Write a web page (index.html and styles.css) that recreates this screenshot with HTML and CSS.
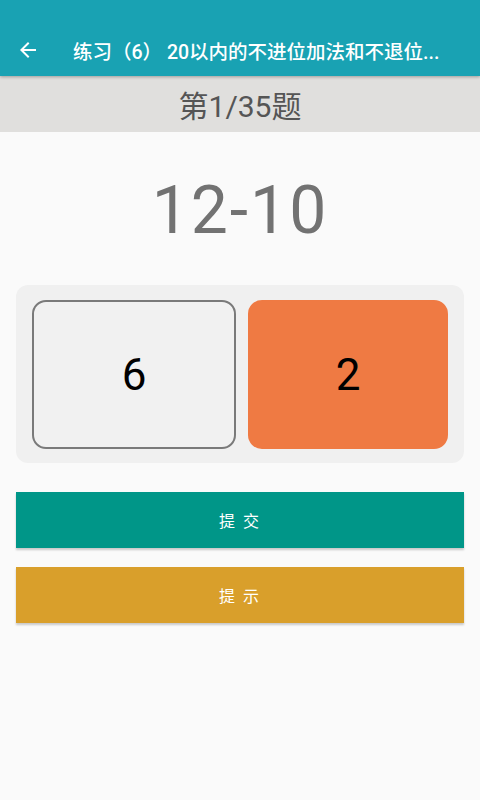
FILE: index.html
```html
<!DOCTYPE html>
<html lang="zh">
<head>
<meta charset="utf-8">
<link rel="stylesheet" href="styles.css">
</head>
<body>
<header class="appbar">
  <div class="status"></div>
  <div class="toolbar">
    <svg class="back" width="24" height="24" viewBox="0 0 24 24"><path d="M20 11H7.83l5.59-5.59L12 4l-8 8 8 8 1.41-1.41L7.83 13H20v-2z" fill="#fff"/></svg>
    <div class="title">练习（6） 20以内的不进位加法和不退位...</div>
  </div>
</header>
<div class="progress">第1/35题</div>
<main class="content">
  <div class="question">12-10</div>
  <div class="options">
    <div class="opt opt-plain">6</div>
    <div class="opt opt-selected">2</div>
  </div>
  <button class="btn btn-submit">提 交</button>
  <button class="btn btn-hint">提 示</button>
</main>
</body>
</html>
```
FILE: styles.css
```css
* { box-sizing: border-box; }
html, body { margin: 0; padding: 0; }
body {
  width: 480px;
  height: 800px;
  background: #fafafa;
  font-family: Roboto, "Noto Sans CJK SC", sans-serif;
  overflow: hidden;
}
.appbar {
  background: #19a2b3;
  box-shadow: 0 1px 3px rgba(0,0,0,0.3);
  position: relative;
  z-index: 1;
}
.status { height: 24px; }
.toolbar {
  height: 52px;
  display: flex;
  align-items: center;
  padding-left: 16px;
  padding-right: 16px;
}
.back { flex: none; }
.title {
  margin-left: 33px;
  color: #fff;
  font-size: 19.5px;
  font-weight: 500;
  white-space: nowrap;
  flex: 1;
  min-width: 0;
}
.progress {
  height: 56px;
  background: #e0dfdd;
  color: #555;
  font-size: 30px;
  display: flex;
  align-items: center;
  justify-content: center;
}
.content {
  padding: 0 16px;
  display: flex;
  flex-direction: column;
}
.question {
  text-align: center;
  color: #727272;
  font-size: 66px;
  letter-spacing: 2px;
  line-height: 66px;
  margin-top: 46px;
  margin-bottom: 41px;
}
.options {
  background: #f0f0f0;
  border-radius: 12px;
  padding: 15px 16px 14px;
  display: flex;
  gap: 12px;
}
.opt {
  flex: 1;
  height: 149px;
  border-radius: 14px;
  display: flex;
  align-items: center;
  justify-content: center;
  font-size: 44px;
  color: #000;
}
.opt-plain {
  background: #f1f1f1;
  border: 2px solid #7a7a7a;
}
.opt-selected {
  background: #ef7a43;
}
.btn {
  border: none;
  height: 56px;
  color: #fff;
  font-family: Roboto, "Noto Sans CJK SC", sans-serif;
  font-size: 16px;
  letter-spacing: 2px;
  box-shadow: 0 2px 2px rgba(0,0,0,0.2);
  padding: 0;
}
.btn-submit {
  background: #009688;
  margin-top: 29px;
}
.btn-hint {
  background: #d99f2b;
  margin-top: 19px;
}
```
